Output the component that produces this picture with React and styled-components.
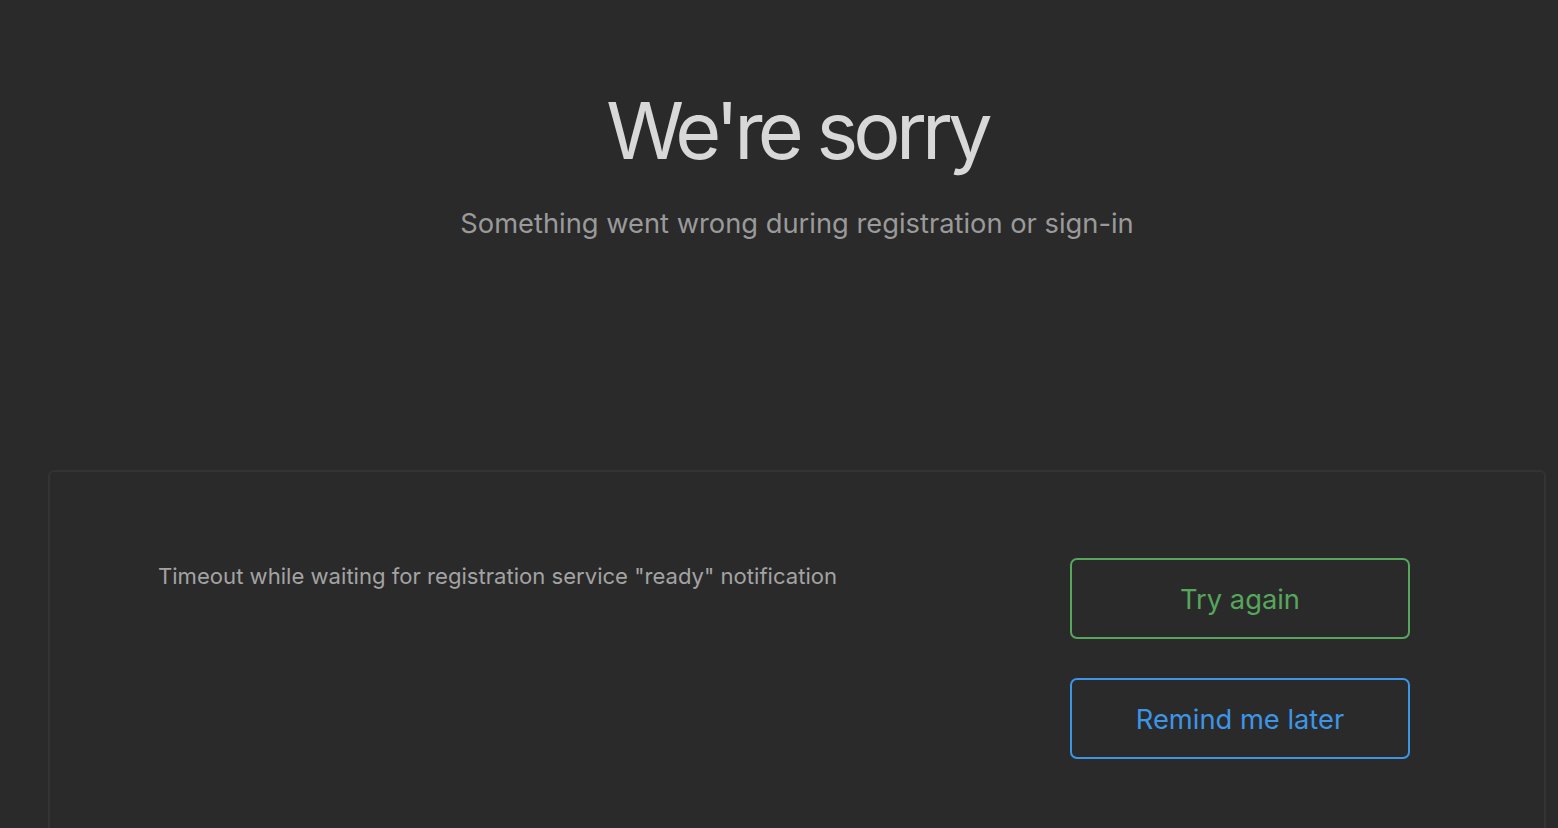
import React from 'react';
import styled, { createGlobalStyle } from 'styled-components';

const GlobalStyle = createGlobalStyle`
    html, body {
        margin: 0;
        padding: 0;
        background-color: #2a2a2a;
        font-family: Inter, 'Noto Sans', sans-serif;
        overflow: hidden;
    }
`;

const Page = styled.main`
    min-height: 828px;
    padding: 0 12px 0 48px;
    box-sizing: border-box;
`;

const Header = styled.header`
    text-align: center;
    padding-top: 82px;
    height: 470px;
    box-sizing: border-box;
`;

const Title = styled.h1`
    margin: 0;
    font-size: 79px;
    font-weight: 400;
    letter-spacing: -4.8px;
    line-height: 96px;
    color: #d8d8d8;
`;

const Subtitle = styled.p`
    margin: 30px 0 0;
    font-size: 27.3px;
    line-height: 32px;
    color: #9a9a9a;
`;

const Card = styled.section`
    border: 2px solid #333333;
    border-bottom: none;
    border-radius: 6px 6px 0 0;
    min-height: 358px;
    box-sizing: border-box;
    padding: 86px 134px 0 108px;
    display: grid;
    grid-template-columns: 1fr 340px;
    align-items: start;
`;

const Message = styled.p`
    margin: 3px 0 0;
    font-size: 22.1px;
    line-height: 30px;
    color: #a3a3a3;
`;

const Actions = styled.div`
    display: flex;
    flex-direction: column;
    gap: 39px;
`;

const Button = styled.button`
    height: 81px;
    width: 340px;
    padding: 2px 0 0;
    background: transparent;
    border: 2px solid ${props => props.color};
    border-radius: 7px;
    color: ${props => props.color};
    font-family: Inter, 'Noto Sans', sans-serif;
    font-size: 27.3px;
    cursor: pointer;
`;

const App = () => {
    return (
        <>
            <GlobalStyle />
            <Page>
                <Header>
                    <Title>We're sorry</Title>
                    <Subtitle>Something went wrong during registration or sign-in</Subtitle>
                </Header>
                <Card>
                    <Message>Timeout while waiting for registration service "ready" notification</Message>
                    <Actions>
                        <Button color="#56a65d">Try again</Button>
                        <Button color="#3d95e6">Remind me later</Button>
                    </Actions>
                </Card>
            </Page>
        </>
    );
};

export default App;
